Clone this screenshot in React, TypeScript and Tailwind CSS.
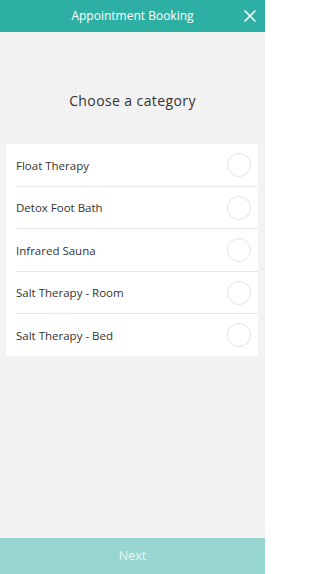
import React from "react";

const items = [
  "Float Therapy",
  "Detox Foot Bath",
  "Infrared Sauna",
  "Salt Therapy - Room",
  "Salt Therapy - Bed",
];

export default function App() {
  return (
    <div
      className="w-[265px] h-[574px] bg-[#f2f2f2] flex flex-col"
      style={{ fontFamily: '"Open Sans", "Liberation Sans", sans-serif' }}
    >
      <div className="h-[32px] bg-[#2db0a3] flex items-center justify-center relative shrink-0">
        <span className="text-white text-[12px] leading-none">Appointment Booking</span>
        <svg
          className="absolute right-[9px] top-[10px]"
          width="12"
          height="12"
          viewBox="0 0 12 12"
          fill="none"
          stroke="white"
          strokeWidth="1.6"
          strokeLinecap="round"
        >
          <path d="M1 1 L11 11 M11 1 L1 11" />
        </svg>
      </div>
      <div className="flex-1 flex flex-col">
        <div className="pt-[60px] pb-[34px] text-center text-[#333] text-[14px] leading-[18px] tracking-[0.4px]">
          Choose a category
        </div>
        <div className="ml-[6px] mr-[7px] bg-white flex flex-col">
          {items.map((it, i) => (
            <div
              key={it}
              className={
                i < items.length - 1
                  ? "h-[42.5px] pl-[10px] flex flex-col"
                  : "h-[41.5px] pl-[10px] flex flex-col"
              }
            >
              <div className="flex-1 flex items-center justify-between pr-[7px] pt-[1px]">
                <span className="text-[#333] text-[11.5px]">{it}</span>
                <span className="w-[24px] h-[24px] rounded-full border border-[#e3e3e3]" />
              </div>
              {i < items.length - 1 && <div className="h-px bg-[#e6e6e6]" />}
            </div>
          ))}
        </div>
      </div>
      <div className="h-[36px] shrink-0 bg-[#97d6d1] flex items-center justify-center">
        <span className="text-[#e8f7f5] text-[12.5px]">Next</span>
      </div>
    </div>
  );
}
